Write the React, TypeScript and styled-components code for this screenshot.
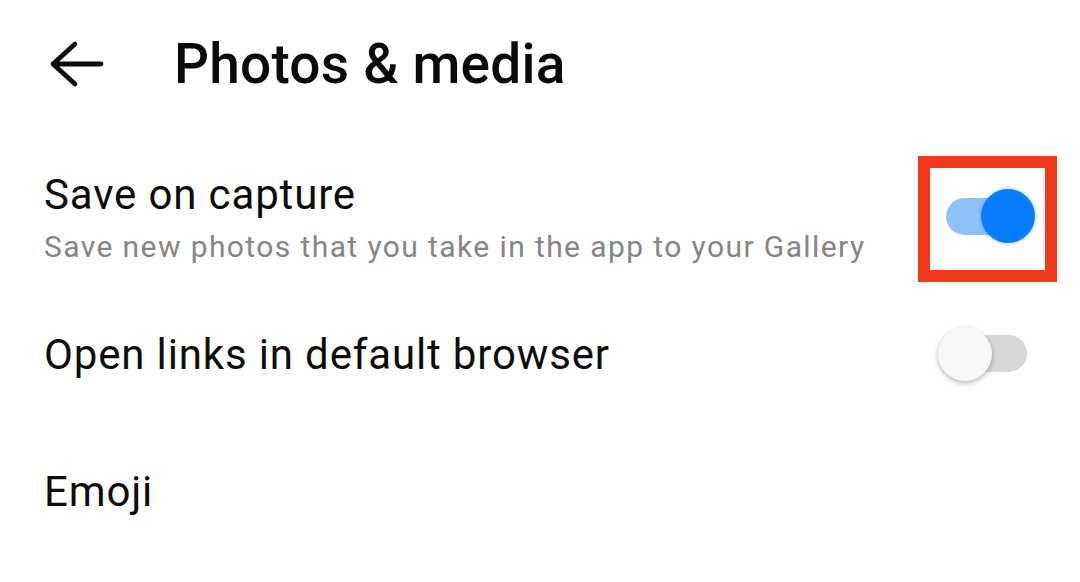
import styled, { createGlobalStyle } from 'styled-components'

const GlobalStyle = createGlobalStyle`
  html, body {
    margin: 0;
    padding: 0;
    background: #ffffff;
  }
  body {
    font-family: Roboto, "Noto Sans", "Liberation Sans", sans-serif;
    color: #0d0d0d;
  }
`

type Setting = {
  title: string
  description?: string
  toggle?: boolean
  highlighted?: boolean
}

const settings: Setting[] = [
  {
    title: 'Save on capture',
    description: 'Save new photos that you take in the app to your Gallery',
    toggle: true,
    highlighted: true,
  },
  { title: 'Open links in default browser', toggle: false },
  { title: 'Emoji' },
]

function BackArrow() {
  return (
    <ArrowIcon width="56" height="48" viewBox="0 0 56 48" aria-hidden>
      <path
        d="M52 24H4M26 4L4 24l22 20"
        fill="none"
        stroke="#0d0d0d"
        strokeWidth="4.8"
        strokeLinecap="round"
        strokeLinejoin="round"
      />
    </ArrowIcon>
  )
}

function Toggle({ on }: { on: boolean }) {
  return (
    <Track $on={on}>
      <Thumb $on={on} />
    </Track>
  )
}

export default function App() {
  return (
    <>
      <GlobalStyle />
      <Page>
        <Header>
          <BackArrow />
          <Title>Photos &amp; media</Title>
        </Header>

        <SettingsList>
          {settings.map((item) => (
            <SettingRow key={item.title}>
              <SettingText>
                <SettingTitle>{item.title}</SettingTitle>
                {item.description && <SettingDescription>{item.description}</SettingDescription>}
              </SettingText>
              {item.toggle !== undefined && (
                <ToggleSlot $highlighted={!!item.highlighted}>
                  <Toggle on={item.toggle} />
                </ToggleSlot>
              )}
            </SettingRow>
          ))}
        </SettingsList>
      </Page>
    </>
  )
}

const Page = styled.div`
  width: 1080px;
  height: 582px;
  box-sizing: border-box;
  padding: 0 45px 0 44px;
  overflow: hidden;
`

const Header = styled.header`
  display: flex;
  align-items: center;
  height: 128px;
`

const ArrowIcon = styled.svg`
  display: block;
  margin-left: 5px;
  flex-shrink: 0;
`

const Title = styled.h1`
  margin: 0 0 0 69px;
  font-size: 55px;
  line-height: 64px;
  font-weight: 500;
  color: #0a0a0a;
  letter-spacing: 0.2px;
`

const SettingsList = styled.div`
  display: flex;
  flex-direction: column;
  padding-top: 20px;
`

const SettingRow = styled.div`
  display: flex;
  align-items: center;
  justify-content: space-between;
  height: 137px;
`

const SettingText = styled.div`
  display: flex;
  flex-direction: column;
  gap: 10px;
  padding-top: 3px;
`

const SettingTitle = styled.div`
  font-size: 42px;
  line-height: 48px;
  letter-spacing: 0.85px;
  color: #0d0d0d;
`

const SettingDescription = styled.div`
  font-size: 30px;
  line-height: 36px;
  letter-spacing: 1.4px;
  color: #858585;
`

const ToggleSlot = styled.div<{ $highlighted: boolean }>`
  position: relative;
  display: flex;
  margin-top: ${({ $highlighted }) => ($highlighted ? '-1px' : '0')};

  &::after {
    content: '';
    display: ${({ $highlighted }) => ($highlighted ? 'block' : 'none')};
    position: absolute;
    left: -20px;
    right: -22px;
    top: -34px;
    bottom: -39px;
    border: 12.5px solid #f03a1a;
    pointer-events: none;
  }
`

const Track = styled.div<{ $on: boolean }>`
  display: flex;
  align-items: center;
  justify-content: ${({ $on }) => ($on ? 'flex-end' : 'flex-start')};
  width: 81px;
  height: 37px;
  margin: 8px;
  border-radius: 19px;
  background: ${({ $on }) => ($on ? '#8fc2fb' : '#d7d7d7')};
`

const Thumb = styled.div<{ $on: boolean }>`
  flex-shrink: 0;
  width: 54px;
  height: 54px;
  border-radius: 50%;
  margin: ${({ $on }) => ($on ? '0 -8px 0 0' : '0 0 0 -8px')};
  background: ${({ $on }) => ($on ? '#0a7cff' : '#f8f8f8')};
  box-shadow: ${({ $on }) =>
    $on ? '0 0 4px rgba(10, 124, 255, 0.45)' : '0 2px 5px rgba(0, 0, 0, 0.3)'};
`
